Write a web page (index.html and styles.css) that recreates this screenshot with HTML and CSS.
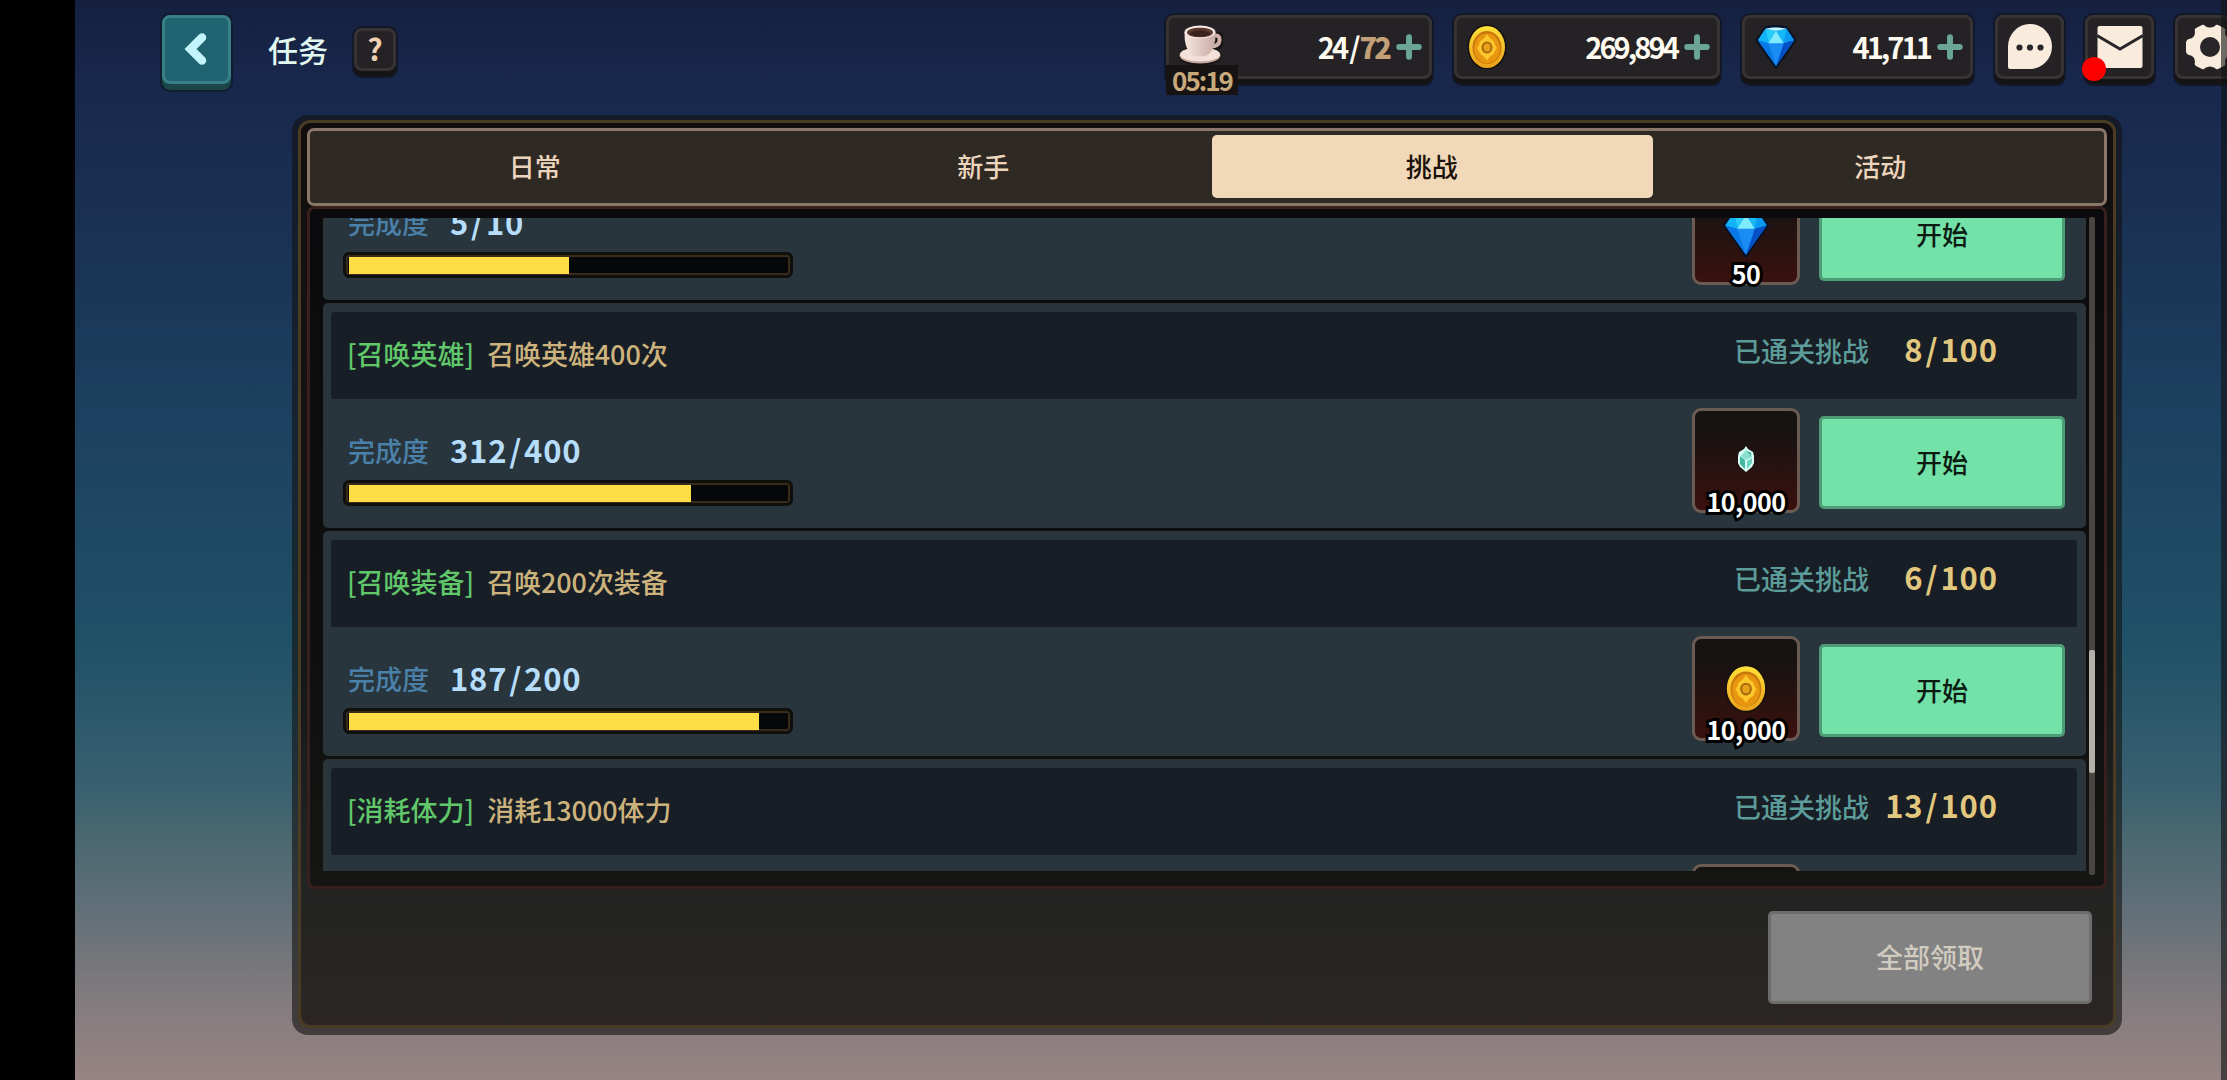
FILE: index.html
```html
<!DOCTYPE html>
<html lang="zh-CN">
  <head>
    <meta charset="UTF-8" />
    <meta name="viewport" content="width=device-width, initial-scale=1.0" />
    <title>任务</title>
    <link rel="stylesheet" href="styles.css">
  </head>
  <body>
    <svg width="0" height="0" class="defs">
      <linearGradient id="coin-rim" x1="0" y1="0" x2="0" y2="1">
        <stop offset="0" stop-color="#ffe138" />
        <stop offset="1" stop-color="#eaa01c" />
      </linearGradient>
      <linearGradient id="cup-body" x1="0" y1="0" x2="1" y2="0">
        <stop offset="0" stop-color="#f7e6e0" />
        <stop offset="1" stop-color="#c9aba3" />
      </linearGradient>
      <symbol id="coin" viewBox="0 0 40 46">
        <ellipse cx="20" cy="23" rx="19.5" ry="22.5" fill="#15100a" />
        <ellipse cx="20" cy="23" rx="18" ry="21" fill="url(#coin-rim)" />
        <ellipse cx="20" cy="23.5" rx="14.5" ry="16.5" fill="#c9780d" />
        <ellipse cx="20" cy="24.5" rx="13" ry="15" fill="#e8960f" />
        <path d="M20 10 L23 14.5 Q28 17 28 21 L30 24 L28 27 Q27 31 23.5 32 L20 36.5 L16.5 32 Q13 31 12 27 L10 24 L12 21 Q12 17 17 14.5Z" fill="#fcc62c" />
        <ellipse cx="20" cy="23.5" rx="4.5" ry="5" fill="#e8a21a" stroke="#a8690e" stroke-width="2" />
      </symbol>
      <symbol id="gem" viewBox="0 0 44 46">
        <path d="M11 3 Q22 0 33 3 L42 16 L22 44 L2 16Z" fill="#0a3a9a" stroke="#0a1226" stroke-width="3" stroke-linejoin="round" />
        <path d="M11 4 Q22 1 33 4 L41 16 L22 43 L3 16Z" fill="#0b7ff0" />
        <path d="M11 4 L3 16 L14 19Z" fill="#12b4f5" />
        <path d="M33 4 L41 16 L30 19Z" fill="#0a9af2" />
        <path d="M3 16 L14 19 L22 43Z" fill="#0878e6" />
        <path d="M41 16 L30 19 L22 43Z" fill="#0550c4" />
        <path d="M14 19 L30 19 L22 43Z" fill="#1a8cf4" />
        <path d="M22 6 L11 4 L14 19Z" fill="#27cbf8" />
        <path d="M22 6 L33 4 L30 19Z" fill="#16b8f6" />
        <path d="M22 6 L30 19 L14 19Z" fill="#7fecfd" />
        <path d="M11 4 Q22 1 33 4 L22 6Z" fill="#c4f8fe" />
      </symbol>
      <symbol id="plus" viewBox="0 0 24 24">
        <path d="M12 3 V21 M3 12 H21" stroke="#6aa598" stroke-width="5.5" stroke-linecap="round" />
      </symbol>
    </svg>

    <div class="screen">
      <div class="topbar">
        <div class="back">
          <svg width="30" height="40" viewBox="0 0 30 40"><path d="M20 7.5 L8.5 19 L20 30.500" fill="none" stroke="#c4f4fb" stroke-width="8.5" stroke-linecap="round" stroke-linejoin="miter" /></svg>
        </div>
        <div class="title">任务</div>
        <div class="box help">?</div>

        <div class="resources">
          <div class="box pill">
            <svg class="cup" width="44" height="42" viewBox="0 0 44 42">
              <ellipse cx="21" cy="32" rx="21.5" ry="9.5" fill="#171211" />
              <path d="M34 12 Q42 10 41 17 Q40 23 33 23" fill="none" stroke="#171211" stroke-width="8" />
              <ellipse cx="21" cy="31.5" rx="20.5" ry="8" fill="#c4a59d" />
              <ellipse cx="21" cy="30.5" rx="20" ry="7" fill="#f3e0da" />
              <path d="M34 12 Q41 10 40.5 16.5 Q40 22 33 22.5" fill="none" stroke="#cdb2aa" stroke-width="4" />
              <path d="M5.5 8 Q5 25 13 31 Q21 34 29 31 Q37 25 36.5 8Z" fill="url(#cup-body)" />
              <ellipse cx="21" cy="8" rx="15.5" ry="6.5" fill="#f6e7e1" />
              <ellipse cx="21" cy="8.5" rx="13" ry="4.8" fill="#5b382f" />
              <ellipse cx="21" cy="9.5" rx="10" ry="3" fill="#3b211c" />
            </svg>
            <span class="amount">24<i>/</i><b>72</b></span>
            <svg width="26" height="26"><use href="#plus" /></svg>
            <span class="timer">05:19</span>
          </div>
          <div class="box pill">
            <svg width="40" height="46"><use href="#coin" /></svg>
            <span class="amount">269,894</span>
            <svg width="26" height="26"><use href="#plus" /></svg>
          </div>
          <div class="box pill short">
            <svg width="42" height="44"><use href="#gem" /></svg>
            <span class="amount">41,711</span>
            <svg width="26" height="26"><use href="#plus" /></svg>
          </div>
          <div class="box icon">
            <svg width="46" height="46" viewBox="0 0 46 46">
              <path d="M3 45 Q1 45 1 43 V23 A22 22.5 0 1 1 23 45Z" fill="#f9ecdd" />
              <circle cx="12.5" cy="23.5" r="3.1" fill="#29262a" />
              <circle cx="23" cy="23.5" r="3.1" fill="#29262a" />
              <circle cx="33.5" cy="23.5" r="3.1" fill="#29262a" />
            </svg>
          </div>
          <div class="box icon">
            <svg width="46" height="42" viewBox="0 0 46 42">
              <rect x="0.5" y="0" width="45" height="42" rx="2" fill="#f9ecdd" />
              <path d="M0 9.5 L23 23 L46 9.5" fill="none" stroke="#29262a" stroke-width="3" />
            </svg>
            <span class="dot"></span>
          </div>
          <div class="box icon">
            <svg width="50" height="46" viewBox="0 0 50 46">
              <path d="M17 1 Q19 0 20 2 Q25 5 30 2 Q31 0 33 1 L39 4 Q41 5 40 8 Q40 14 46 15 Q48 15 49 18 V28 Q48 31 46 31 Q40 32 40 38 Q41 41 39 42 L33 45 Q31 46 30 44 Q25 41 20 44 Q19 46 17 45 L11 42 Q9 41 10 38 Q10 32 4 31 Q2 31 1 28 V18 Q2 15 4 15 Q10 14 10 8 Q9 5 11 4Z" fill="#f9ecdd" />
              <circle cx="25" cy="23" r="10" fill="#29262a" />
            </svg>
          </div>
        </div>
      </div>

      <div class="panel">
        <div class="tabs">
          <div class="tab">日常</div>
          <div class="tab">新手</div>
          <div class="tab active">挑战</div>
          <div class="tab">活动</div>
        </div>

        <div class="list">
          <div class="viewport">
            <div class="quest first">
              <div class="quest-head"></div>
              <div class="quest-body">
                <div class="progress">
                  <div class="count"><span>完成度</span>5<i>/</i>10</div>
                  <div class="bar"><div class="fill" style="width: 50%"></div></div>
                </div>
                <div class="reward">
                  <svg width="48" height="50"><use href="#gem" /></svg>
                  <span>50</span>
                </div>
                <div class="start">开始</div>
              </div>
            </div>

            <div class="quest">
              <div class="quest-head">
                <span class="tag">[召唤英雄]</span>
                <span class="name">召唤英雄400次</span>
                <span class="cleared">已通关挑战</span>
                <span class="total">8<i>/</i>100</span>
              </div>
              <div class="quest-body">
                <div class="progress">
                  <div class="count"><span>完成度</span>312<i>/</i>400</div>
                  <div class="bar"><div class="fill" style="width: 78%"></div></div>
                </div>
                <div class="reward">
                  <svg class="crystal" width="18" height="26" viewBox="0 0 18 26">
                    <path d="M9 0 L11 3 L16 6 L17 10 V17 L15 21 L9 26 L3 21 L1 17 V10 L2 6 L7 3Z" fill="#d9fff4" />
                    <path d="M9 4 L14 7 L15 11 L9 14 L4 10Z" fill="#8adfce" />
                    <path d="M3 10 L8 14 V23 L3 18Z" fill="#45b8a4" />
                    <path d="M10 15 L15 12 V17 L10 23Z" fill="#6cd3c0" />
                    <path d="M10 5 L14 7 L14 10Z" fill="#3ba391" />
                  </svg>
                  <span>10,000</span>
                </div>
                <div class="start">开始</div>
              </div>
            </div>

            <div class="quest">
              <div class="quest-head">
                <span class="tag">[召唤装备]</span>
                <span class="name">召唤200次装备</span>
                <span class="cleared">已通关挑战</span>
                <span class="total">6<i>/</i>100</span>
              </div>
              <div class="quest-body">
                <div class="progress">
                  <div class="count"><span>完成度</span>187<i>/</i>200</div>
                  <div class="bar"><div class="fill" style="width: 93.5%"></div></div>
                </div>
                <div class="reward">
                  <svg width="44" height="49"><use href="#coin" /></svg>
                  <span>10,000</span>
                </div>
                <div class="start">开始</div>
              </div>
            </div>

            <div class="quest">
              <div class="quest-head">
                <span class="tag">[消耗体力]</span>
                <span class="name">消耗13000体力</span>
                <span class="cleared">已通关挑战</span>
                <span class="total">13<i>/</i>100</span>
              </div>
              <div class="quest-body">
                <div class="progress"></div>
                <div class="reward"></div>
                <div class="start hidden"></div>
              </div>
            </div>
          </div>
          <div class="scrollbar"><div class="thumb"></div></div>
        </div>

        <div class="claim">全部领取</div>
      </div>
    </div>
  </body>
</html>
```

FILE: styles.css
```css
* {
  box-sizing: border-box;
}

body {
  margin: 0;
  background: #000;
  font-family: "Noto Sans CJK SC", sans-serif;
  overflow: hidden;
}

svg {
  display: block;
  flex: none;
}

i {
  padding: 0 2px;
  font-style: normal;
}

.defs {
  position: absolute;
}

.screen {
  position: relative;
  height: 1080px;
  margin-left: 75px;
  overflow: hidden;
  background: linear-gradient(
    #15203f 0,
    #18284d 90px,
    #1a3355 250px,
    #1d4160 420px,
    #1f4f66 620px,
    #28576a 700px,
    #3a6070 790px,
    #4b6870 840px,
    #5e6e78 900px,
    #74767a 960px,
    #847c7f 1005px,
    #978483 1080px
  );
}

.screen::after {
  content: "";
  position: absolute;
  top: 0;
  right: 0;
  width: 6px;
  height: 100%;
  background: rgba(18, 18, 20, 0.6);
}

/* top bar */
.topbar {
  display: flex;
  height: 115px;
  padding: 15px 0 0 87px;
}

.back {
  display: flex;
  align-items: center;
  justify-content: center;
  flex: none;
  width: 69px;
  height: 69px;
  background: #1f6470;
  border: 3px solid #388088;
  border-radius: 8px;
  box-shadow: 0 6px 0 #1b4549, 0 6px 0 2px #101c30, 0 0 0 2px #101c30;
}

.title {
  flex: none;
  width: 60px;
  margin: 0 26px 0 37px;
  font-size: 30px;
  font-weight: 500;
  line-height: 69px;
  color: #e2f8f1;
}

.box {
  background: #252225;
  border: 3px solid #373335;
  border-radius: 8px;
  box-shadow: 0 5px 0 #161315, 0 5px 0 2px #131829, 0 0 0 2px #131829;
}

.help {
  flex: none;
  width: 42px;
  height: 43px;
  margin-top: 13px;
  font-size: 30px;
  font-weight: bold;
  line-height: 34px;
  text-align: center;
  color: #f0cfb2;
}

.resources {
  display: flex;
  gap: 22px;
  flex: none;
  margin-left: 770px;
}

.pill {
  position: relative;
  display: flex;
  align-items: center;
  width: 266px;
  height: 64px;
  padding: 0 7px 0 10px;
}

.pill.short {
  width: 231px;
}

.cup {
  margin-bottom: 4px;
}

.amount {
  flex: 1;
  padding-right: 7px;
  margin-top: -3px;
  font-size: 29px;
  font-weight: bold;
  line-height: 40px;
  letter-spacing: -2.9px;
  text-align: right;
  color: #fffaf0;
}

.amount b {
  color: #c3a078;
}

.amount i {
  padding: 0 2px 0 3px;
}

.timer {
  position: absolute;
  left: -3px;
  top: 47px;
  width: 72px;
  height: 30px;
  background: #161312;
  color: #c8a97c;
  font-size: 26px;
  font-weight: bold;
  line-height: 29px;
  letter-spacing: -2px;
  text-align: center;
}

.icon {
  position: relative;
  display: flex;
  align-items: center;
  justify-content: center;
  width: 69px;
  height: 64px;
  margin-right: -1px;
}

.dot {
  position: absolute;
  left: -6px;
  top: 39px;
  width: 24px;
  height: 24px;
  border-radius: 50%;
  background: #ff0000;
}

/* quest window */
.panel {
  position: relative;
  display: flex;
  flex-direction: column;
  width: 1830px;
  height: 920px;
  margin-left: 217px;
  padding: 13px 15px 31px;
  border-radius: 16px;
  background: rgba(18, 16, 15, 0.6);
}

.panel::before {
  content: "";
  position: absolute;
  inset: 5px 6px 7px;
  border: 3px solid #4a3c22;
  border-radius: 12px;
  background: linear-gradient(#120e10, #161616 60%, #212322 82%, #2b2624);
}

.tabs {
  position: relative;
  display: flex;
  height: 78px;
  padding: 4px 0 5px;
  border: 3px solid #8b7769;
  border-radius: 7px;
  background: #2f2923;
}

.tab {
  flex: 1;
  margin: 0 3px 0 5px;
  border-radius: 5px;
  font-size: 26px;
  font-weight: 500;
  line-height: 61px;
  text-align: center;
  text-indent: -1px;
  color: #ecd5bc;
}

.tab.active {
  background: #f0d8b8;
  color: #1c120a;
}

.list {
  position: relative;
  display: flex;
  height: 683px;
  padding: 8px 9px 11px 13px;
  border: 3px solid #38201c;
  border-radius: 8px;
  background: linear-gradient(#0b0b0d, #0e0e0f 60%, #151513);
}

.viewport {
  width: 1763px;
  height: 653px;
  margin-top: 1px;
  overflow: hidden;
}

.quest {
  height: 225px;
  margin-bottom: 3px;
  padding: 6px 6px 0 5px;
  border: 3px solid #2b3439;
  border-radius: 5px;
  background: #28353d;
}

.quest.first {
  margin-top: -143px;
}

.quest-head {
  display: flex;
  height: 87px;
  padding: 0 79px 0 16px;
  border-radius: 3px;
  background: #181e25;
  font-size: 27px;
  font-weight: 500;
  line-height: 83px;
  white-space: nowrap;
}

.tag {
  color: #60c76b;
}

.name {
  margin-left: 13px;
  letter-spacing: -0.1px;
  color: #ccb37d;
}

.cleared {
  margin-left: auto;
  line-height: 77px;
  color: #5c9c9a;
}

.total {
  width: 129px;
  font-size: 31px;
  font-weight: bold;
  line-height: 74px;
  letter-spacing: 0.9px;
  text-align: right;
  color: #e2c87e;
}

.quest-body {
  display: flex;
}

.progress {
  flex: 1;
  padding: 33px 0 0 12px;
}

.count {
  display: flex;
  height: 40px;
  padding-left: 5px;
  font-size: 31px;
  font-weight: bold;
  line-height: 35px;
  letter-spacing: 0.8px;
  color: #b6ddfb;
}

.count span {
  width: 102px;
  font-size: 27px;
  font-weight: 500;
  line-height: 38px;
  letter-spacing: 0;
  color: #4b80a8;
}

.bar {
  width: 450px;
  height: 26px;
  margin-top: 8px;
  padding: 2px 2px 2px 3px;
  border: 3px solid #0f0f0c;
  border-radius: 6px;
  background: #050708;
  box-shadow: inset 0 0 0 2px #3a2b1a;
}

.fill {
  height: 17px;
  background: #ffdd47;
}

.reward {
  position: relative;
  display: flex;
  align-items: center;
  justify-content: center;
  width: 108px;
  height: 105px;
  margin: 9px 19px 0 0;
  border: 3px solid #6b5b53;
  border-radius: 9px;
  background: linear-gradient(#161312 20%, #3a110e);
}

.crystal {
  margin-bottom: 3px;
}

.reward span {
  position: absolute;
  left: -3px;
  right: -3px;
  bottom: -9px;
  font-size: 25px;
  font-weight: bold;
  line-height: 36px;
  letter-spacing: -0.5px;
  text-align: center;
  color: #fff;
  -webkit-text-stroke: 6px #000;
  paint-order: stroke fill;
}

.start {
  width: 246px;
  height: 93px;
  margin: 17px 12px 0 0;
  border: 3px solid #4e9c75;
  border-radius: 5px;
  background: #72e2a8;
  color: #0d1c12;
  font-size: 26px;
  font-weight: 500;
  line-height: 85px;
  text-align: center;
}

.start.hidden {
  visibility: hidden;
}

.scrollbar {
  width: 6px;
  height: 658px;
  margin-left: 3px;
  border-radius: 2px;
  background: #4a4541;
}

.thumb {
  height: 123px;
  margin-top: 433px;
  border-radius: 2px;
  background: #b5b0aa;
}

.claim {
  position: relative;
  align-self: flex-end;
  width: 324px;
  height: 93px;
  margin: 22px 15px 0 0;
  border: 3px solid #6c6c6c;
  border-radius: 5px;
  background: #828282;
  color: #d2cbc0;
  font-size: 27px;
  font-weight: 500;
  line-height: 86px;
  text-align: center;
}
```
